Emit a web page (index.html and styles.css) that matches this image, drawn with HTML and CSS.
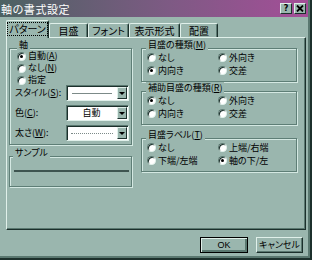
FILE: index.html
```html
<!DOCTYPE html>
<html lang="ja">
  <head>
    <meta charset="UTF-8" />
    <title>軸の書式設定</title>
    <link rel="stylesheet" href="styles.css">
  </head>
  <body>
    <div class="window">
      <div class="titlebar">
        <span class="title">軸の書式設定</span>
        <div class="caption-buttons">
          <span class="caption-btn">?</span>
          <span class="caption-btn">
            <svg width="8" height="7" viewBox="0 0 8 7"><path d="M1 0.5 L7 6.5 M7 0.5 L1 6.5" stroke="#000" stroke-width="1.8" /></svg>
          </span>
        </div>
      </div>

      <div class="tabs">
        <div class="tab active"><span class="focus">パターン</span></div>
        <div class="tab">目盛</div>
        <div class="tab">フォント</div>
        <div class="tab">表示形式</div>
        <div class="tab">配置</div>
      </div>

      <div class="panel">
        <div class="col-left">
          <div class="group axis">
            <div class="group-label">軸</div>
            <div class="radio checked"><i></i>自動(<u>A</u>)</div>
            <div class="radio"><i></i>なし(<u>N</u>)</div>
            <div class="radio"><i></i>指定</div>
            <div class="field">
              <span>スタイル(<u>S</u>):</span>
              <div class="combo">
                <div class="combo-value"><span class="line-solid"></span></div>
                <span class="combo-btn"></span>
              </div>
            </div>
            <div class="field">
              <span>色(<u>C</u>):</span>
              <div class="combo">
                <div class="combo-value">自動</div>
                <span class="combo-btn"></span>
              </div>
            </div>
            <div class="field">
              <span>太さ(<u>W</u>):</span>
              <div class="combo">
                <div class="combo-value"><span class="line-dotted"></span></div>
                <span class="combo-btn"></span>
              </div>
            </div>
          </div>

          <div class="group sample">
            <div class="group-label">サンプル</div>
            <div class="sample-line"></div>
          </div>
        </div>

        <div class="col-right">
          <div class="group">
            <div class="group-label">目盛の種類(<u>M</u>)</div>
            <div class="radio-grid">
              <div class="radio"><i></i>なし</div>
              <div class="radio"><i></i>外向き</div>
              <div class="radio checked"><i></i>内向き</div>
              <div class="radio"><i></i>交差</div>
            </div>
          </div>

          <div class="group minor">
            <div class="group-label">補助目盛の種類(<u>R</u>)</div>
            <div class="radio-grid">
              <div class="radio checked"><i></i>なし</div>
              <div class="radio"><i></i>外向き</div>
              <div class="radio"><i></i>内向き</div>
              <div class="radio"><i></i>交差</div>
            </div>
          </div>

          <div class="group labels">
            <div class="group-label">目盛ラベル(<u>T</u>)</div>
            <div class="radio-grid">
              <div class="radio"><i></i>なし</div>
              <div class="radio"><i></i>上端/右端</div>
              <div class="radio"><i></i>下端/左端</div>
              <div class="radio checked"><i></i>軸の下/左</div>
            </div>
          </div>
        </div>
      </div>

      <div class="footer">
        <button class="btn default">OK</button>
        <button class="btn">キャンセル</button>
      </div>
    </div>
  </body>
</html>
```

FILE: styles.css
```css
* {
  box-sizing: border-box;
}

body {
  margin: 0;
  font-family: "Noto Sans CJK JP", "Noto Sans", sans-serif;
  font-size: 9px;
  line-height: 12px;
  color: #000;
  font-feature-settings: "palt";
}

u {
  text-decoration: underline;
  text-underline-offset: 1px;
}

.window {
  width: 312px;
  height: 260px;
  background: #9ab6ae;
  display: flex;
  flex-direction: column;
  border-right: 2px solid #1c302c;
  border-bottom: 2px solid #1c302c;
  box-shadow: inset -2px -2px #5a7870;
  padding: 0 2px 2px 0;
}

/* title bar */
.titlebar {
  height: 17px;
  flex: none;
  display: flex;
  align-items: center;
  justify-content: space-between;
  padding: 0 2px 0 1px;
  background: linear-gradient(to right, #4c6262, #7e5a84 55%, #a44e98);
  color: #fff;
}

.title {
  font-size: 11px;
  letter-spacing: 0.6px;
}

.caption-buttons {
  display: flex;
  gap: 2px;
}

.caption-btn {
  width: 12px;
  height: 11px;
  display: flex;
  align-items: center;
  justify-content: center;
  background: #9ab6ae;
  color: #000;
  font-family: "DejaVu Sans", sans-serif;
  font-weight: bold;
  font-size: 8px;
  border-top: 1px solid #e0f0ea;
  border-left: 1px solid #e0f0ea;
  border-right: 1px solid #1c302c;
  border-bottom: 1px solid #1c302c;
}

/* tabs */
.tabs {
  height: 20px;
  flex: none;
  display: flex;
  align-items: flex-end;
  margin-left: 6px;
  font-size: 10px;
}

.tab {
  height: 14px;
  display: flex;
  align-items: center;
  justify-content: center;
  border-top: 1px solid #e0f0ea;
  border-left: 1px solid #e0f0ea;
  border-right: 1px solid #1c302c;
  border-radius: 2px 2px 0 0;
  box-shadow: inset -1px 0 #5a7870;
}

.tab:nth-child(1) { width: 43px; }
.tab:nth-child(2) { width: 39px; }
.tab:nth-child(3) { width: 41px; }
.tab:nth-child(4) { width: 51px; }
.tab:nth-child(5) { width: 38px; }

.tab.active {
  height: 18px;
  margin-bottom: -1px;
  position: relative;
  z-index: 1;
  background: #9ab6ae;
  padding-bottom: 2px;
}

.focus {
  outline: 1px dotted #000;
  outline-offset: 0;
  padding: 0 1px;
}

/* tab page */
.panel {
  height: 193px;
  flex: none;
  margin: 0 2px 0 6px;
  display: flex;
  gap: 9px;
  padding: 10px 6px 0 2px;
  border-top: 1px solid #e0f0ea;
  border-left: 1px solid #e0f0ea;
  border-right: 1px solid #1c302c;
  border-bottom: 1px solid #1c302c;
  box-shadow: inset -1px -1px #5a7870;
}

.col-left {
  width: 123px;
}

.col-right {
  width: 156px;
}

.group {
  border: 1px solid #5e7e76;
  box-shadow: inset 1px 1px #d4e8e2, 1px 1px #d4e8e2;
  padding: 0 2px 4px 5px;
}

.group-label {
  width: fit-content;
  margin: -10px 0 0 -1px;
  padding: 0 2px;
  background: #9ab6ae;
}

.group.axis {
  padding: 0 2px 3px 7px;
}

.group.axis .group-label {
  margin: -10px 0 -1px 0;
}

.group.minor {
  margin-top: 9px;
}

.group.labels {
  margin-top: 13px;
}

.group.sample {
  margin-top: 11px;
  padding: 0 2px 14px 4px;
}

.group.sample .group-label {
  margin-bottom: -1px;
}

.sample-line {
  height: 2px;
  margin: 12px 0 0 0;
  background: #3e5450;
}

/* radio buttons */
.radio {
  display: flex;
  align-items: center;
  height: 12px;
}

.radio i {
  width: 9px;
  height: 9px;
  margin-right: 2px;
  border-radius: 50%;
  background: #fff;
  border: 1px solid;
  border-color: #5a7870 #e0f0ea #e0f0ea #5a7870;
  box-shadow: inset 1px 1px #1c302c;
  display: flex;
  align-items: center;
  justify-content: center;
}

.radio.checked i::after {
  content: "";
  width: 3px;
  height: 3px;
  border-radius: 50%;
  background: #000;
}

.radio-grid {
  display: grid;
  grid-template-columns: 71px 1fr;
}

.radio-grid .radio {
  height: 13px;
}

/* label + dropdown rows */
.field {
  display: flex;
  align-items: center;
  justify-content: space-between;
  margin: -1px 0 0 -2px;
}

.field + .field {
  margin-top: 4px;
}

.combo {
  width: 63px;
  height: 16px;
  display: flex;
  background: #fff;
  border-top: 1px solid #5a7870;
  border-left: 1px solid #5a7870;
  border-right: 1px solid #e0f0ea;
  border-bottom: 1px solid #e0f0ea;
  box-shadow: inset 1px 1px #1c302c;
  padding: 1px;
}

.combo-value {
  flex: 1;
  display: flex;
  align-items: center;
  justify-content: center;
  padding-right: 2px;
}

.line-solid {
  width: 40px;
  height: 1px;
  background: #7c8a88;
}

.line-dotted {
  width: 42px;
  border-top: 1px dotted #7c8a88;
}

.combo-btn {
  width: 10px;
  background: #9ab6ae;
  border-top: 1px solid #e0f0ea;
  border-left: 1px solid #e0f0ea;
  border-right: 1px solid #1c302c;
  border-bottom: 1px solid #1c302c;
  display: flex;
  align-items: center;
  justify-content: center;
}

.combo-btn::after {
  content: "";
  border-left: 3px solid transparent;
  border-right: 3px solid transparent;
  border-top: 3px solid #000;
}

/* dialog buttons */
.footer {
  display: flex;
  justify-content: flex-end;
  gap: 8px;
  padding: 7px 5px 0 0;
}

.btn {
  height: 16px;
  margin: 0;
  padding: 0;
  font: inherit;
  font-family: "Liberation Sans", "Noto Sans CJK JP", sans-serif;
  color: #000;
  background: #9ab6ae;
  border-top: 1px solid #e0f0ea;
  border-left: 1px solid #e0f0ea;
  border-right: 1px solid #1c302c;
  border-bottom: 1px solid #1c302c;
  box-shadow: inset -1px -1px #5a7870;
}

.btn.default {
  width: 48px;
  border: 1px solid #000;
  box-shadow: inset 1px 1px #e0f0ea, inset -2px -2px #5a7870;
}

.btn:not(.default) {
  width: 47px;
  font-family: "Noto Sans CJK JP", sans-serif;
}
```
